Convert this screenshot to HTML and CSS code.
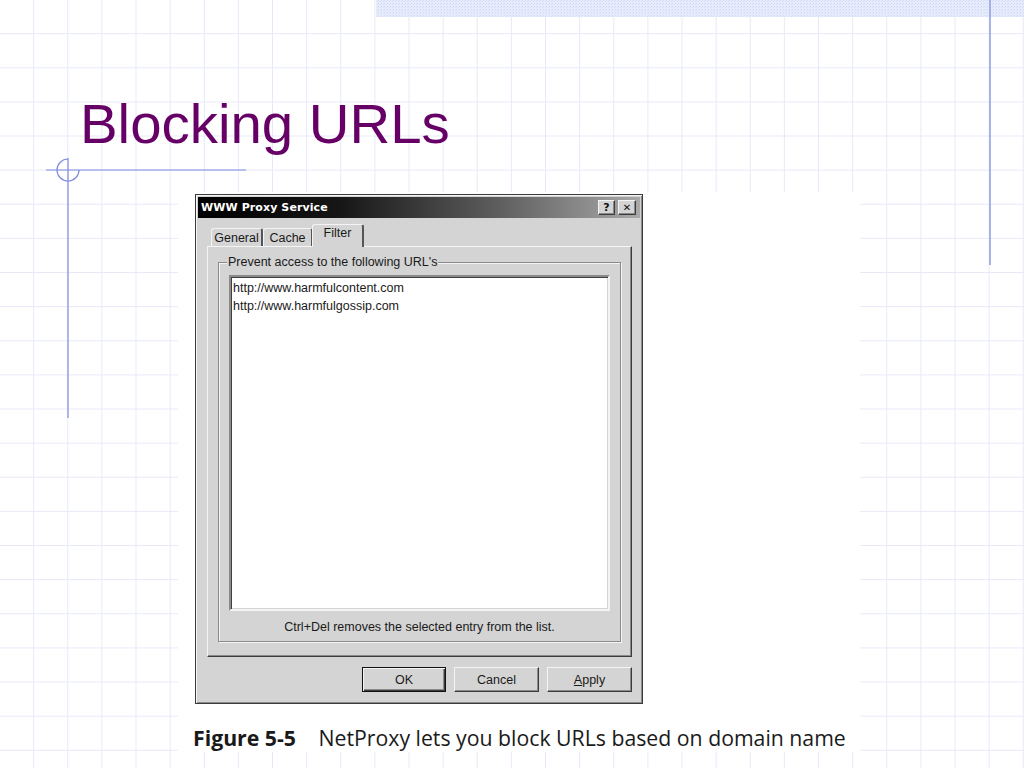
FILE: index.html
```html
<!DOCTYPE html>
<html lang="en">
<head>
    <meta charset="UTF-8">
    <meta name="viewport" content="width=device-width, initial-scale=1.0">
    <title>Blocking URLs</title>
    <link rel="stylesheet" href="styles.css">
</head>
<body>

    <div class="slide">

        <!-- slide decoration: top band, guide lines and the little circle -->
        <svg class="deco" width="1024" height="768" viewBox="0 0 1024 768">
            <defs>
                <pattern id="dots" width="3" height="3" patternUnits="userSpaceOnUse">
                    <rect width="3" height="3" fill="#e6ecfc"></rect>
                    <rect width="1" height="1" fill="#cfd9f6"></rect>
                    <rect x="2" y="1" width="1" height="1" fill="#d6def7"></rect>
                </pattern>
            </defs>
            <rect x="376" y="0" width="648" height="17" fill="url(#dots)"></rect>
            <line x1="990" y1="0" x2="990" y2="265" stroke="#8e9de2" stroke-width="1.5"></line>
            <line x1="68" y1="158" x2="68" y2="418" stroke="#7d8bdc" stroke-width="1.2"></line>
            <line x1="46" y1="170" x2="246" y2="170" stroke="#7d8bdc" stroke-width="1.2"></line>
            <path d="M68 159 A11 11 0 1 0 79 170" fill="none" stroke="#7d8bdc" stroke-width="1.2"></path>
        </svg>

        <h1 class="title">Blocking URLs</h1>

        <div class="figure">
            <div class="dialog">
                <div class="titlebar">
                    <span class="titlebar-text">WWW Proxy Service</span>
                    <span class="title-btn">?</span>
                    <span class="title-btn close">&#x2715;</span>
                </div>

                <div class="dialog-body">
                    <div class="tabs">
                        <div class="tab tab-general">General</div>
                        <div class="tab tab-cache">Cache</div>
                        <div class="tab tab-filter active">Filter</div>
                    </div>

                    <div class="panel">
                        <fieldset class="group">
                            <legend>Prevent access to the following URL's</legend>
                            <div class="listbox">
                                <div class="list-item">http://www.harmfulcontent.com</div>
                                <div class="list-item">http://www.harmfulgossip.com</div>
                            </div>
                            <div class="hint">Ctrl+Del removes the selected entry from the list.</div>
                        </fieldset>
                    </div>

                    <div class="buttons">
                        <button class="btn default">OK</button>
                        <button class="btn">Cancel</button>
                        <button class="btn"><u>A</u>pply</button>
                    </div>
                </div>
            </div>

            <p class="caption"><span class="fig-label">Figure 5-5</span> NetProxy lets you block URLs based on domain name</p>
        </div>

    </div>

</body>
</html>
```

FILE: styles.css
```css
* {
    margin: 0;
    padding: 0;
    box-sizing: border-box;
}
body {
    background-color: white;
    overflow: hidden;
}
.slide {
    position: relative;
    width: 1024px;
    height: 768px;
    overflow: hidden;
    background-color: white;
    background-image:
        linear-gradient(to right, transparent calc(100% - 1px), #e7e9f8 calc(100% - 1px)),
        linear-gradient(to bottom, transparent calc(100% - 1px), #e7e9f8 calc(100% - 1px));
    background-size: 34.133px 34.133px;
}
.deco {
    position: absolute;
    top: 0;
    left: 0;
    pointer-events: none;
}
.title {
    padding: 92px 0 0 80px;
    font-family: "Liberation Sans", Arial, sans-serif;
    font-size: 56.4px;
    line-height: 64px;
    font-weight: normal;
    color: #660066;
}
.figure {
    margin: 36px 0 0 178px;
    width: 682px;
    height: 560px;
    padding: 2px 0 0 17px;
    background-color: white;
}

/* ---- the Windows dialog ---- */
.dialog {
    width: 448px;
    height: 510px;
    padding: 2px;
    background-color: #d4d4d4;
    border: 1px solid #3c3c3c;
    box-shadow: inset 1px 1px 0 #f4f4f4, inset -1px -1px 0 #8a8a8a;
    font-family: "Liberation Sans", Arial, sans-serif;
    font-size: 12.5px;
    color: #1a1a1a;
}
.titlebar {
    display: flex;
    align-items: center;
    height: 21px;
    padding: 0 4px 0 3px;
    background: linear-gradient(to right, #000 0%, #161616 32%, #5e5e5e 68%, #a9a9a9 100%);
}
.titlebar-text {
    flex: 1;
    font-family: "DejaVu Sans", Verdana, sans-serif;
    font-size: 11px;
    font-weight: bold;
    color: white;
    letter-spacing: 0.1px;
}
.title-btn {
    display: flex;
    align-items: center;
    justify-content: center;
    width: 17px;
    height: 15px;
    margin-left: 3px;
    background-color: #d4d4d4;
    border: 1px solid;
    border-color: #f4f4f4 #3c3c3c #3c3c3c #f4f4f4;
    box-shadow: inset -1px -1px 0 #888;
    font-family: "DejaVu Sans", Verdana, sans-serif;
    font-size: 11px;
    font-weight: bold;
    color: #111;
}
.title-btn.close {
    width: 18px;
    font-size: 10px;
}
.dialog-body {
    padding: 6px 8px 0 9px;
}
.tabs {
    display: flex;
    align-items: flex-end;
    height: 22px;
    padding-left: 4px;
}
.tab {
    height: 18px;
    padding-top: 2px;
    text-align: center;
    background-color: #d4d4d4;
    border-left: 1px solid #f4f4f4;
    border-top: 1px solid #f4f4f4;
    border-right: 2px solid #555;
    border-radius: 3px 3px 0 0;
}
.tab-general {
    width: 52px;
}
.tab-cache {
    width: 50px;
}
.tab-filter {
    width: 52px;
}
.tab.active {
    position: relative;
    height: 23px;
    margin-bottom: -1px;
    margin-left: -1px;
    padding-top: 1px;
    z-index: 1;
}
.panel {
    height: 411px;
    padding: 8px 10px 0 10px;
    border-top: 1px solid #f4f4f4;
    border-left: 1px solid #f4f4f4;
    border-right: 1px solid #3c3c3c;
    border-bottom: 1px solid #3c3c3c;
    box-shadow: inset -1px -1px 0 #8a8a8a;
}
.group {
    width: 403px;
    padding: 5px 10px 6px 10px;
    border: 1px solid #8a8a8a;
    box-shadow: inset 1px 1px 0 #f4f4f4, 1px 1px 0 #f4f4f4;
}
.group legend {
    margin-left: -2px;
    padding: 0 1px;
    line-height: 15px;
    background-color: #d4d4d4;
}
.listbox {
    height: 336px;
    padding: 2px 0 0 2px;
    background-color: white;
    border: 2px solid;
    border-color: #8a8a8a #f4f4f4 #f4f4f4 #8a8a8a;
    box-shadow: inset 1px 1px 0 #404040, inset -1px -1px 0 #d4d4d4;
}
.list-item {
    line-height: 18px;
    white-space: nowrap;
}
.hint {
    margin-top: 8px;
    line-height: 16px;
    text-align: center;
}
.buttons {
    display: flex;
    justify-content: flex-end;
    gap: 8px;
    margin-top: 10px;
}
.btn {
    width: 85px;
    height: 25px;
    background-color: #d4d4d4;
    border: 1px solid;
    border-color: #f4f4f4 #3c3c3c #3c3c3c #f4f4f4;
    box-shadow: inset -1px -1px 0 #8a8a8a;
    font-family: "Liberation Sans", Arial, sans-serif;
    font-size: 12.5px;
    color: #1a1a1a;
}
.btn.default {
    width: 84px;
    border: 1px solid #111;
    box-shadow: inset 1px 1px 0 #f4f4f4, inset -1px -1px 0 #3c3c3c, inset -2px -2px 0 #8a8a8a;
}

/* ---- figure caption ---- */
.caption {
    margin-top: 20px;
    margin-left: -2px;
    font-family: "Open Sans", sans-serif;
    font-size: 21.25px;
    line-height: 28px;
    color: #1a1a1a;
    white-space: nowrap;
}
.fig-label {
    font-weight: bold;
    margin-right: 17px;
}
```
